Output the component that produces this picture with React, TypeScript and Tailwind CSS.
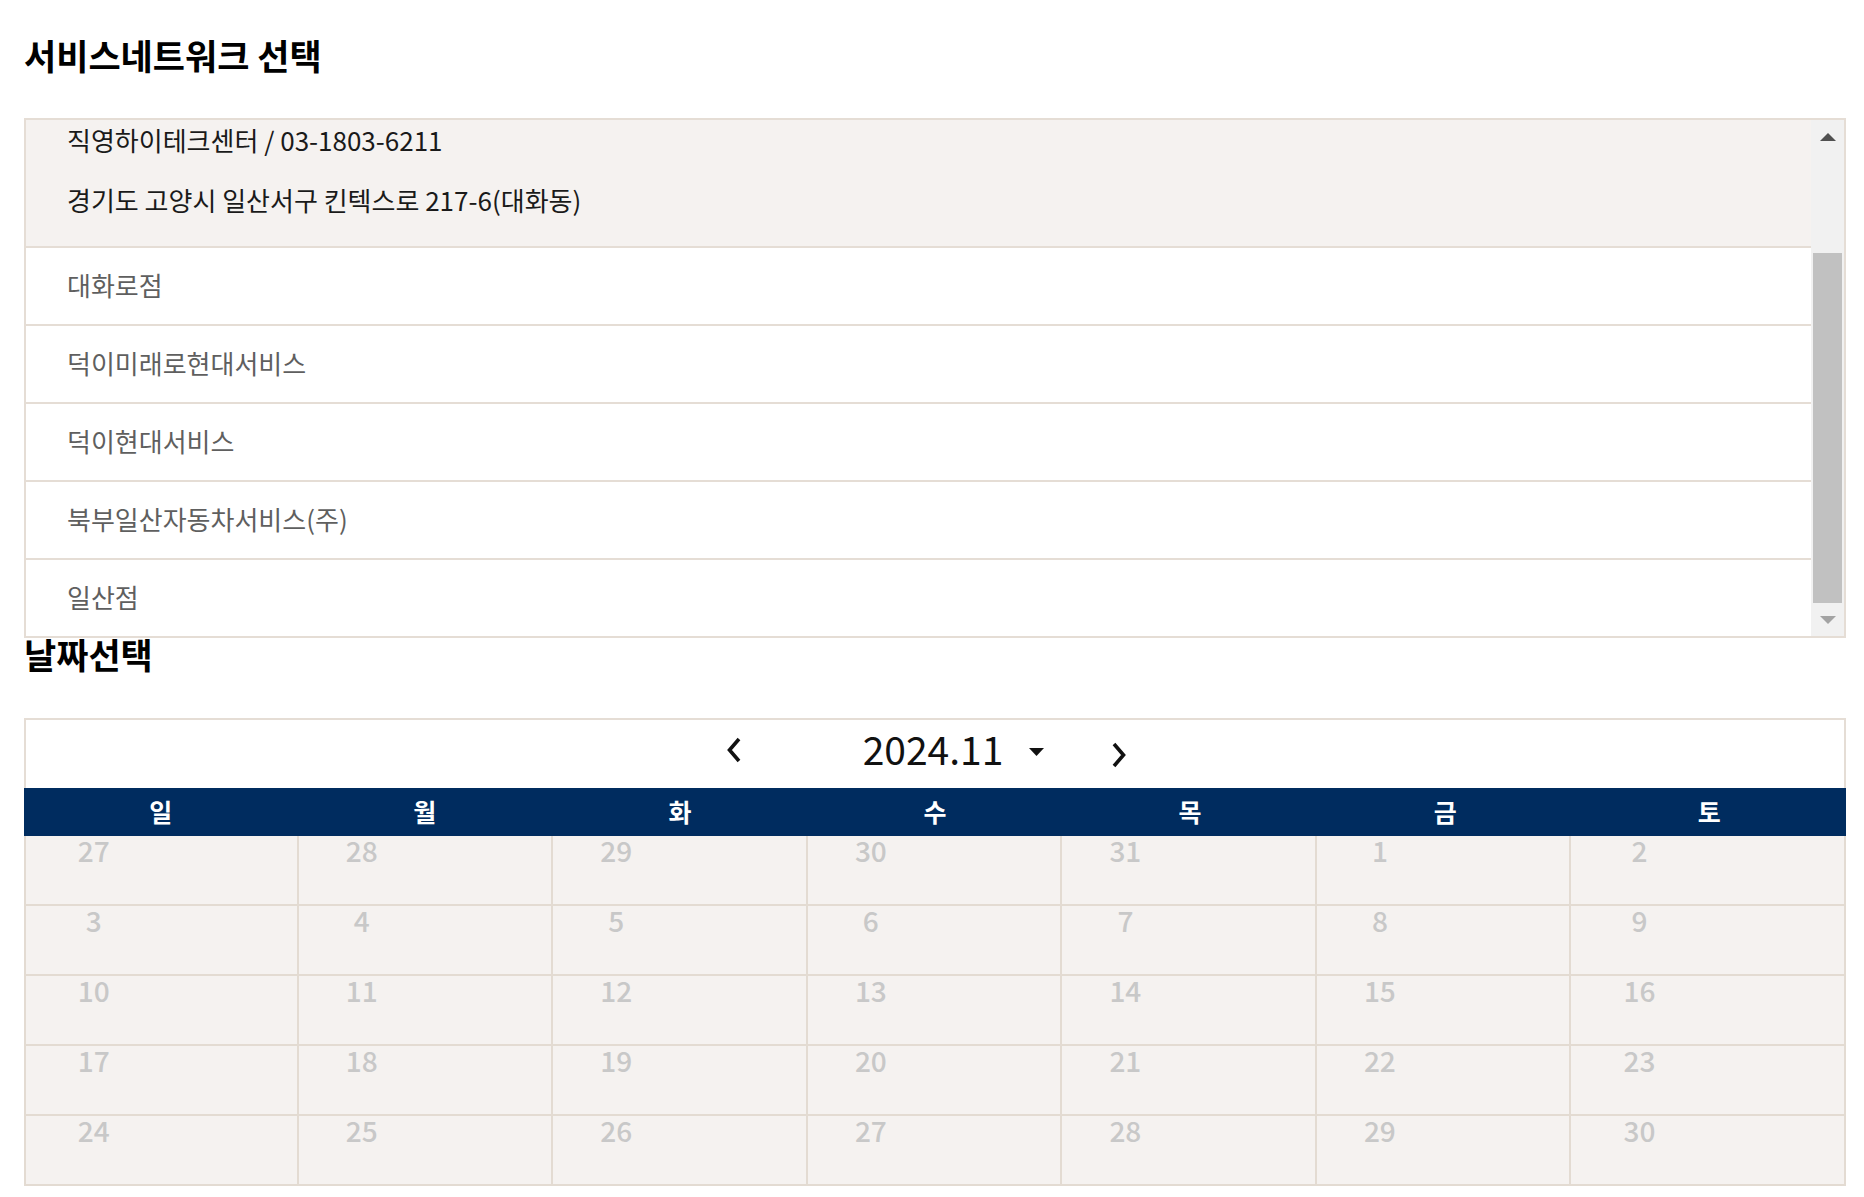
const shops = ['대화로점', '덕이미래로현대서비스', '덕이현대서비스', '북부일산자동차서비스(주)', '일산점'];

const weekDays = ['일', '월', '화', '수', '목', '금', '토'];

const weeks = [
  [27, 28, 29, 30, 31, 1, 2],
  [3, 4, 5, 6, 7, 8, 9],
  [10, 11, 12, 13, 14, 15, 16],
  [17, 18, 19, 20, 21, 22, 23],
  [24, 25, 26, 27, 28, 29, 30],
];

function Chevron({ dir }: { dir: 'left' | 'right' }) {
  return (
    <svg width="16" height="26" viewBox="0 0 16 26" fill="none">
      <path
        d={dir === 'left' ? 'M13 2 L3.5 13 L13 24' : 'M3 2 L12.5 13 L3 24'}
        stroke="#111"
        strokeWidth="3.6"
      />
    </svg>
  );
}

function FakeScrollbar() {
  return (
    <div className="w-[33px] shrink-0 bg-[#f1f1f1] flex flex-col">
      <div className="h-[33px] flex items-center justify-center">
        <svg width="16" height="8" viewBox="0 0 16 8">
          <polygon points="0,8 8,0 16,8" fill="#505050" />
        </svg>
      </div>
      <div className="h-[100px]" />
      <div className="h-[350px] mx-[2px] bg-[#c1c1c1]" />
      <div className="h-[33px] flex items-center justify-center">
        <svg width="16" height="8" viewBox="0 0 16 8">
          <polygon points="0,0 16,0 8,8" fill="#a3a3a3" />
        </svg>
      </div>
    </div>
  );
}

function ShopList() {
  return (
    <div className="mt-[47px] h-[520px] border-2 border-[#e5ddd5] flex overflow-hidden">
      <div className="flex-1 min-w-0">
        {/* 선택된 항목 */}
        <div className="h-[126px] bg-[#f5f2f0] pl-[41px] pt-[8px] flex flex-col gap-[36px] text-[26px] leading-6 text-[#1a1a1a]">
          <p>직영하이테크센터 / 03-1803-6211</p>
          <p>경기도 고양시 일산서구 킨텍스로 217-6(대화동)</p>
        </div>
        {shops.map((name) => (
          <div
            key={name}
            className="h-[78px] border-t-2 border-[#e5ddd5] flex items-center pl-[41px] pb-[4px] text-[26px] text-[#5f5f5f]"
          >
            {name}
          </div>
        ))}
      </div>
      <FakeScrollbar />
    </div>
  );
}

function Calendar() {
  return (
    <div className="mt-[48px]">
      <div className="h-[70px] border-x-2 border-t-2 border-[#e5ddd5] flex items-center justify-center pr-[17px] pb-[12px]">
        <button className="translate-y-[2px]">
          <Chevron dir="left" />
        </button>
        <span className="ml-[121px] text-[39px] leading-none text-[#111]">2024.11</span>
        <svg className="ml-[26px] translate-y-[4px]" width="15" height="8" viewBox="0 0 15 8">
          <polygon points="0,0 15,0 7.5,8" fill="#111" />
        </svg>
        <button className="ml-[67px] translate-y-[7px]">
          <Chevron dir="right" />
        </button>
      </div>

      <div className="grid grid-cols-[15%_14%_14%_14%_14%_14%_15%] h-[48px] items-center bg-[#002c5f] text-white text-[25px] font-semibold">
        {weekDays.map((d) => (
          <div key={d} className="text-center">
            {d}
          </div>
        ))}
      </div>

      <div className="grid grid-cols-[15%_14%_14%_14%_14%_14%_15%] border-x-2 border-[#e3dbd2] bg-[#f5f2f0]">
        {weeks.map((week, wi) =>
          week.map((day, di) => (
            <div
              key={`${wi}-${di}`}
              className={`h-[70px] border-b-2 border-[#e3dbd2] ${di < 6 ? 'border-r-2' : ''}`}
            >
              <div className="w-1/2 text-center text-[28px] leading-7 font-medium text-[#c8c8c8]">{day}</div>
            </div>
          )),
        )}
      </div>
    </div>
  );
}

export default function App() {
  return (
    <div className="min-h-screen bg-white pl-[24px] pr-[18px] pt-[39px] font-['Noto_Sans_CJK_KR','Noto_Sans',sans-serif]">
      <h2 className="text-[35px] leading-8 font-bold text-black">서비스네트워크 선택</h2>
      <ShopList />
      <h2 className="text-[35px] leading-8 font-bold text-black">날짜선택</h2>
      <Calendar />
    </div>
  );
}
